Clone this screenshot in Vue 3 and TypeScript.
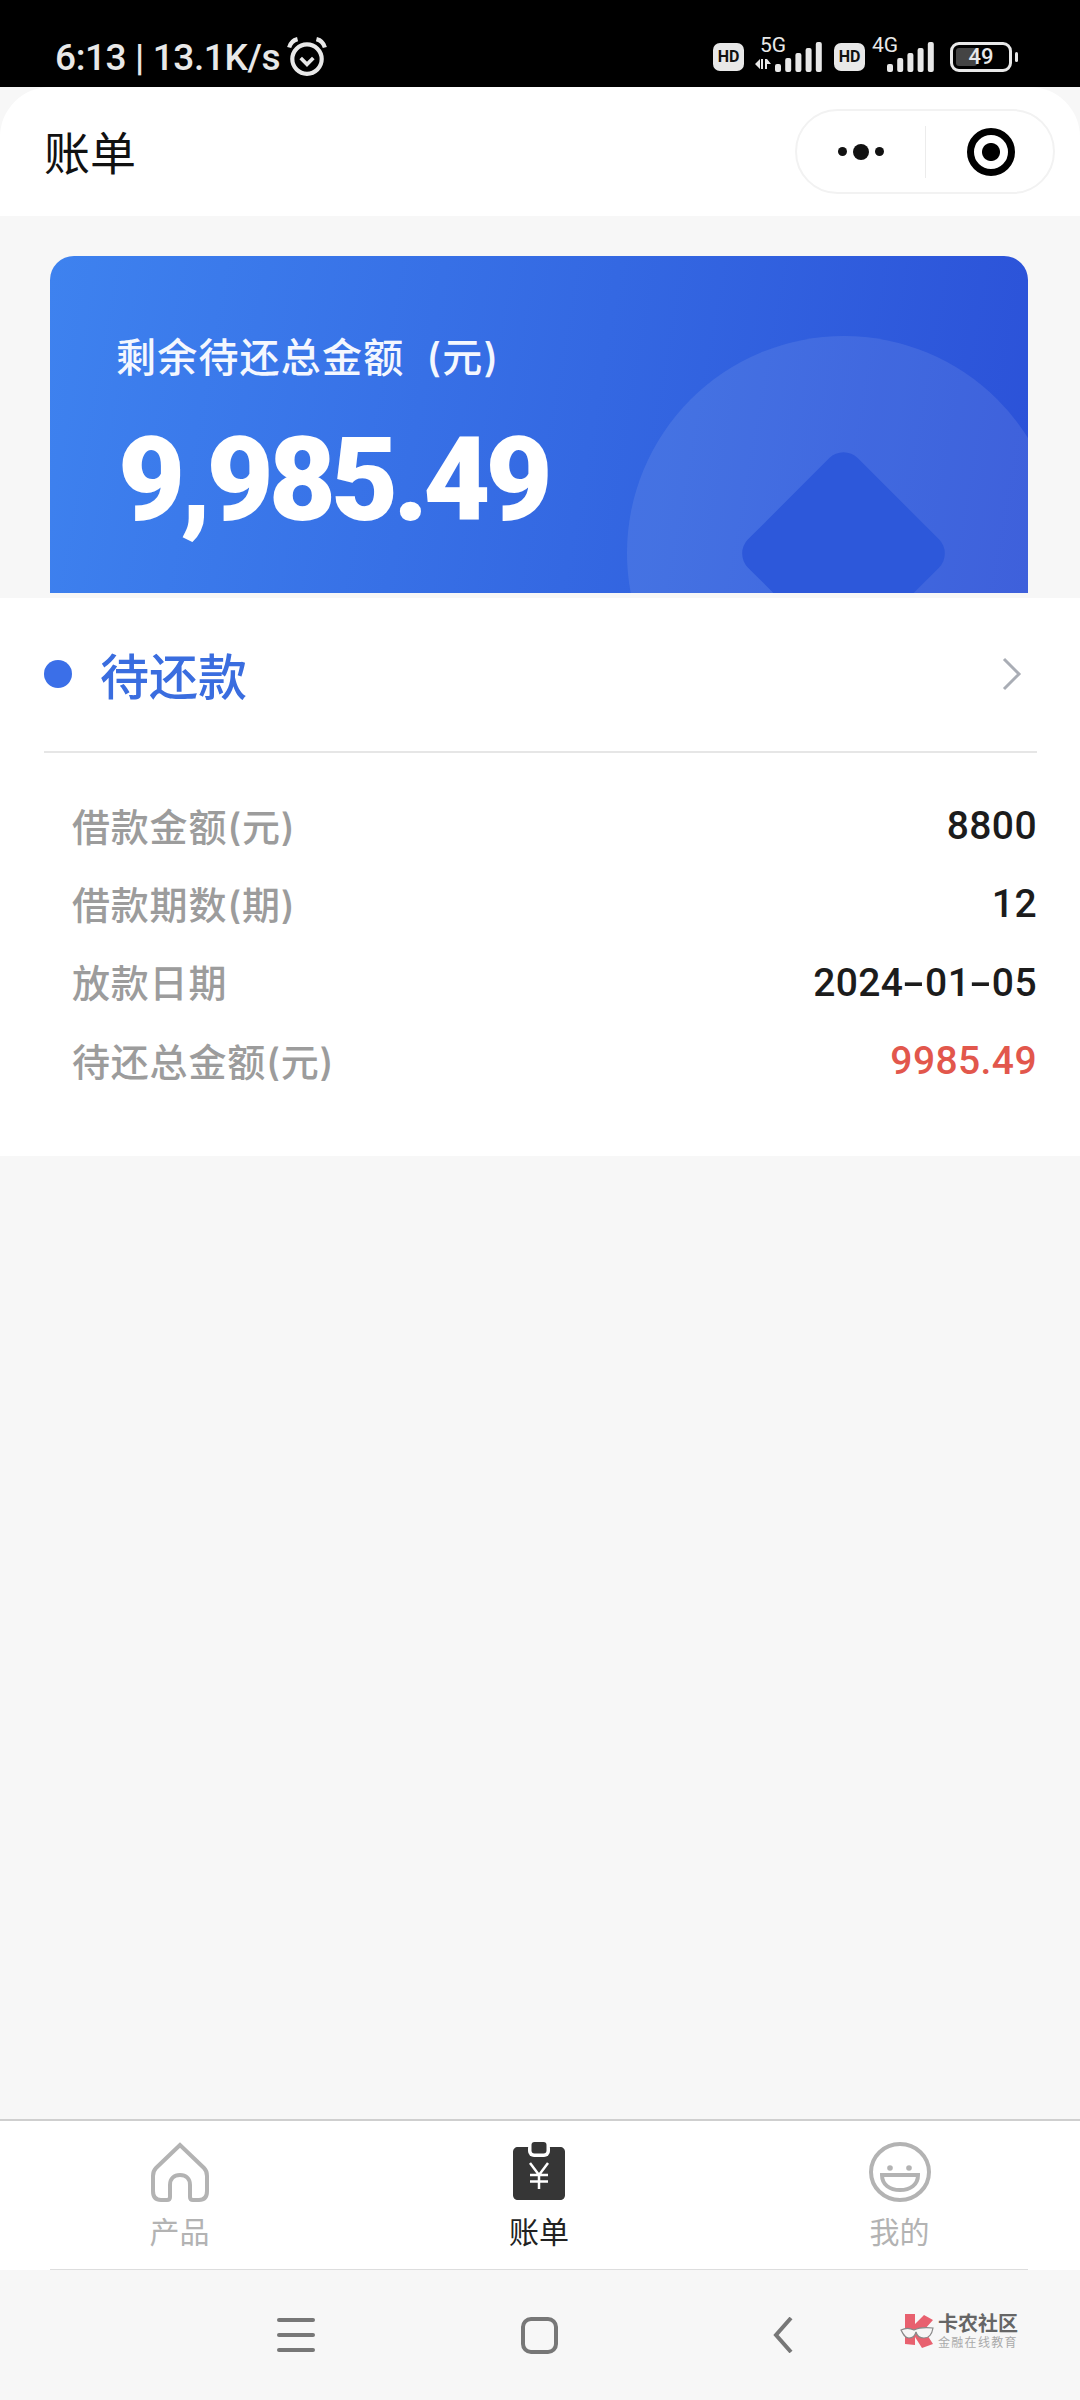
<script setup lang="ts">
const rows = [
  { label: "借款金额(元)", value: ["8800"] },
  { label: "借款期数(期)", value: ["12"] },
  { label: "放款日期", value: ["2024", "01", "05"] },
  { label: "待还总金额(元)", value: ["9985.49"], red: true },
]
const nets = [
  { name: "5G", arrows: true },
  { name: "4G", arrows: false },
]
const bars = [
  { x: 0, top: 22 },
  { x: 10.2, top: 16 },
  { x: 20.4, top: 11 },
  { x: 30.6, top: 6 },
  { x: 40.8, top: 0 },
]
</script>

<template>
  <div class="page">
    <div class="status">
      <div class="status-left">
        <span>6:13 | 13.1K/s</span>
        <svg class="alarm" width="42" height="40" viewBox="0 0 40 38" fill="none" stroke="#e8e8e8">
          <circle cx="20" cy="21" r="14" stroke-width="4" />
          <path d="M14 20l6 6 6-6" stroke-width="3.5" />
          <path d="M3 10c1-4 4-7 8-8M37 10c-1-4-4-7-8-8" stroke-width="4" />
        </svg>
      </div>
      <div class="status-right">
        <div v-for="n in nets" :key="n.name" class="net" :class="{ lte: !n.arrows }">
          <span class="hd">HD</span>
          <div class="sig">
            <span class="gen">{{ n.name }}</span>
            <svg v-if="n.arrows" class="arrows" width="16" height="12" viewBox="0 0 16 12" fill="#e8e8e8">
              <path d="M0 6l5-5v10zM6 1h2v10H6zM10 1h2v10h-2zM12 1l4 5h-4z" />
            </svg>
            <svg width="47" height="30" viewBox="0 0 47 30" fill="#e8e8e8">
              <rect v-for="b in bars" :key="b.x" :x="b.x" :y="b.top" width="6" :height="30 - b.top" rx="2" />
            </svg>
          </div>
        </div>
        <div class="battery">
          <div class="batt-body">
            <span class="batt-fill"></span>
            <span class="batt-num">49</span>
          </div>
          <span class="batt-tip"></span>
        </div>
      </div>
    </div>

    <header class="head">
      <span class="head-title">账单</span>
      <div class="capsule">
        <div class="cap-btn">
          <span class="d small"></span>
          <span class="d"></span>
          <span class="d small"></span>
        </div>
        <span class="cap-line"></span>
        <div class="cap-btn">
          <span class="target"></span>
        </div>
      </div>
    </header>

    <section class="card-wrap">
      <div class="card">
        <span class="circle"></span>
        <span class="diamond"></span>
        <div class="card-label">剩余待还总金额 (元)</div>
        <div class="card-amount">9,985.49</div>
      </div>
    </section>

    <section class="detail">
      <div class="detail-top">
        <span class="dot"></span>
        <span class="detail-title">待还款</span>
        <svg class="chev" width="20" height="34" viewBox="0 0 20 34" fill="none" stroke="#a9adb5" stroke-width="3">
          <path d="M2 2l15 15-15 15" />
        </svg>
      </div>
      <div class="rows">
        <div v-for="r in rows" :key="r.label" class="row">
          <span class="row-label">{{ r.label }}</span>
          <span class="row-value" :class="{ red: r.red }">
            <template v-for="(part, i) in r.value" :key="part">
              <i v-if="i > 0" class="dash">-</i>{{ part }}
            </template>
          </span>
        </div>
      </div>
    </section>

    <div class="spacer"></div>

    <nav class="tabs">
      <div class="tab">
        <svg width="60" height="60" viewBox="0 0 60 60" fill="none" stroke="#b3b3b3" stroke-width="4">
          <path d="M30 3L6 26c-3 3-3 5-3 8v15c0 6 3 9 8 9h6c2 0 3-1 3-3V43c0-6 4-10 10-10s10 4 10 10v12c0 2 1 3 3 3h6c5 0 8-3 8-9V34c0-3 0-5-3-8z" />
        </svg>
        <span>产品</span>
      </div>
      <div class="tab active">
        <svg width="60" height="60" viewBox="0 0 60 60">
          <path d="M9 5h42c3 0 5 2 5 5v43c0 3-2 5-5 5H9c-3 0-5-2-5-5V10c0-3 2-5 5-5z" fill="#363636" />
          <rect x="19" y="0" width="22" height="15" rx="6" fill="#fff" />
          <rect x="22.500" y="0" width="15" height="11.500" rx="3" fill="#363636" />
          <path d="M21 21l9 12 9-12M30 33v14M21 33h18M21 39.500h18" fill="none" stroke="#fff" stroke-width="2.500" />
        </svg>
        <span>账单</span>
      </div>
      <div class="tab">
        <svg width="62" height="60" viewBox="0 0 62 60" fill="none" stroke="#b3b3b3" stroke-width="4">
          <ellipse cx="31" cy="30" rx="29" ry="28" />
          <circle cx="21" cy="26" r="2.800" fill="#b3b3b3" stroke="none" />
          <circle cx="40" cy="26" r="2.800" fill="#b3b3b3" stroke="none" />
          <path d="M13 33h36c0 10-8 15-18 15s-18-5-18-15z" />
        </svg>
        <span>我的</span>
      </div>
    </nav>

    <div class="sysnav">
      <div class="burger"><i></i><i></i><i></i></div>
      <span class="home-key"></span>
      <svg class="back" width="20" height="36" viewBox="0 0 20 36" fill="none" stroke="#777" stroke-width="4">
        <path d="M18 1L3 18l15 17" />
      </svg>
      <div class="logo">
        <svg width="36" height="36" viewBox="0 0 36 36">
          <path d="M5 1h10v10L24 2l9 5-9 10 9 14-11 4-7-11v8l-10-1z" fill="#e8616f" />
          <path d="M1 17c4-2 9-2 13 0 4-2 10-3 19-2-1 6-4 10-9 10-4 0-7-2-8-6-1 4-3 6-7 6s-6-4-8-8z" fill="#f6f6f6" stroke="#888" stroke-width="1.200" />
        </svg>
        <div class="logo-text">
          <span class="logo-main">卡农社区</span>
          <span class="logo-sub">金融在线教育</span>
        </div>
      </div>
    </div>
  </div>
</template>

<style>
html,
body {
  margin: 0;
  background: #000;
}
</style>

<style scoped>
.page {
  width: 1080px;
  height: 2400px;
  display: flex;
  flex-direction: column;
  background: #f7f7f7;
  overflow: hidden;
  font-family: Inter, "Noto Sans CJK SC", sans-serif;
}

.status {
  height: 87px;
  flex: none;
  background: #000;
  color: #e8e8e8;
  display: flex;
  justify-content: space-between;
  padding: 0 62px 0 55px;
  box-sizing: border-box;
}
.status-left {
  display: flex;
  align-items: center;
  gap: 6px;
  height: 114px;
  font: 500 37px Roboto, sans-serif;
  letter-spacing: -0.4px;
  white-space: nowrap;
}
.status-right {
  display: flex;
  align-items: center;
  gap: 12px;
  height: 114px;
}
.net {
  display: flex;
  align-items: flex-end;
  gap: 11px;
}
.net.lte {
  gap: 22px;
}
.hd {
  width: 31px;
  height: 28px;
  border-radius: 7px;
  background: #e8e8e8;
  color: #111;
  font: 700 16px/28px Roboto, sans-serif;
  text-align: center;
  margin-bottom: 1px;
}
.sig {
  position: relative;
  display: flex;
  align-items: flex-end;
  gap: 4px;
  height: 30px;
}
.sig svg {
  display: block;
}
.arrows {
  margin-bottom: 2px;
}
.gen {
  position: absolute;
  left: 5px;
  top: -7px;
  font: 400 21px/21px Roboto, sans-serif;
}
.lte .gen {
  left: -15px;
}
.battery {
  display: flex;
  align-items: center;
  gap: 3px;
  margin-left: 4px;
}
.batt-body {
  position: relative;
  width: 62px;
  height: 30px;
  box-sizing: border-box;
  border: 3px solid #e8e8e8;
  border-radius: 9px;
  padding: 3px;
}
.batt-fill {
  display: block;
  width: 42%;
  height: 100%;
  background: #444;
  border-radius: 3px;
}
.batt-num {
  position: absolute;
  inset: 0;
  font: 500 22px/24px Roboto, sans-serif;
  text-align: center;
}
.batt-tip {
  width: 3px;
  height: 10px;
  background: #e8e8e8;
  border-radius: 2px;
}

.head {
  height: 129px;
  flex: none;
  background: #fff;
  border-radius: 50px 50px 0 0;
  display: flex;
  align-items: center;
  justify-content: space-between;
  padding: 0 25px 0 44px;
  position: relative;
}
.head-title {
  margin-top: -3px;
  font-size: 46px;
  color: #111;
}
.capsule {
  width: 260px;
  height: 85px;
  box-sizing: border-box;
  border: 2px solid #f2f2f2;
  border-radius: 43px;
  display: flex;
  align-items: center;
}
.cap-btn {
  flex: 1;
  display: flex;
  align-items: center;
  justify-content: center;
  gap: 6px;
}
.cap-line {
  width: 1px;
  height: 52px;
  background: #ececec;
}
.d {
  width: 16px;
  height: 16px;
  border-radius: 50%;
  background: #111;
}
.d.small {
  width: 9px;
  height: 9px;
}
.target {
  width: 48px;
  height: 48px;
  margin-left: 4px;
  box-sizing: border-box;
  border: 7px solid #000;
  border-radius: 50%;
  background: radial-gradient(circle, #000 0 8.500px, #fff 9.500px);
}

.card-wrap {
  flex: none;
  height: 382px;
  padding: 40px 52px 5px 50px;
  box-sizing: border-box;
}
.card {
  position: relative;
  height: 337px;
  overflow: hidden;
  border-radius: 24px 24px 0 0;
  background: linear-gradient(100deg, #3e82ef 0%, #3468e2 55%, #2b51d8 100%);
  color: #fff;
  padding: 76px 0 0 66px;
  box-sizing: border-box;
}
.circle {
  position: absolute;
  left: 577px;
  top: 80px;
  width: 434px;
  height: 434px;
  border-radius: 50%;
  background: rgba(255, 255, 255, 0.09);
}
.diamond {
  position: absolute;
  left: 716px;
  top: 220px;
  width: 155px;
  height: 155px;
  border-radius: 20px;
  transform: rotate(45deg);
  background: #2d58da;
}
.card-label {
  position: relative;
  font-size: 40px;
  line-height: 52px;
  font-weight: 500;
  letter-spacing: 1.2px;
  word-spacing: 10px;
  color: #f4f7fe;
  white-space: nowrap;
}
.card-amount {
  position: relative;
  margin-top: 31px;
  margin-left: 2px;
  font: 900 116px/130px Roboto, sans-serif;
  letter-spacing: -5px;
}

.detail {
  flex: none;
  height: 558px;
  background: #fff;
  padding: 0 43px 0 44px;
  box-sizing: border-box;
}
.detail-top {
  height: 155px;
  display: flex;
  align-items: center;
  border-bottom: 2px solid #e6e6e6;
  box-sizing: border-box;
  padding-bottom: 2px;
}
.dot {
  width: 28px;
  height: 28px;
  border-radius: 50%;
  background: #3b6fe8;
}
.detail-title {
  margin-left: 28px;
  flex: 1;
  font-size: 49px;
  font-weight: 500;
  color: #3a6ddf;
}
.chev {
  margin-right: 15px;
}
.rows {
  padding: 33px 0 0 28px;
  display: flex;
  flex-direction: column;
}
.row {
  height: 78.300px;
  display: flex;
  align-items: center;
  justify-content: space-between;
}
.row-label {
  margin-top: -2px;
  font-size: 38px;
  font-weight: 500;
  letter-spacing: 0.8px;
  color: #9c9c9c;
}
.row-value {
  margin-top: 2px;
  font: 500 39px Roboto, sans-serif;
  letter-spacing: 0.4px;
  color: #1c1c1c;
}
.row-value.red {
  color: #e2574c;
}
.dash {
  display: inline-block;
  margin: 0 4px;
  font-style: normal;
  transform: scaleX(1.7);
}

.spacer {
  flex: 1;
}

.tabs {
  flex: none;
  height: 151px;
  background: #fff;
  border-top: 2px solid #cfcfcf;
  box-sizing: border-box;
  display: grid;
  grid-template-columns: 359px 360px 361px;
  position: relative;
}
.tabs::after {
  content: "";
  position: absolute;
  left: 50px;
  right: 52px;
  bottom: 0;
  height: 1px;
  background: #dddddd;
}
.tab {
  display: flex;
  flex-direction: column;
  align-items: center;
  padding-top: 21px;
  color: #b3b3b3;
  font-size: 30px;
  line-height: 36px;
  gap: 12px;
}
.tab.active {
  color: #222;
}
.tab svg {
  display: block;
}

.sysnav {
  flex: none;
  height: 130px;
  position: relative;
  display: flex;
  align-items: center;
  padding-left: 277px;
  box-sizing: border-box;
}
.burger {
  width: 38px;
  display: flex;
  flex-direction: column;
  gap: 11px;
}
.burger i {
  display: block;
  height: 4px;
  background: #777;
  border-radius: 2px;
}
.home-key {
  width: 37px;
  height: 37px;
  margin-left: 206px;
  box-sizing: border-box;
  border: 4px solid #777;
  border-radius: 10px;
}
.back {
  margin-left: 215px;
}
.logo {
  display: flex;
  align-items: center;
  gap: 2px;
  margin-left: 107px;
  margin-top: -8px;
}
.logo-text {
  display: flex;
  flex-direction: column;
  width: 82px;
  white-space: nowrap;
}
.logo-main {
  font-size: 20px;
  line-height: 22px;
  font-weight: 700;
  color: #666;
}
.logo-sub {
  font-size: 12px;
  line-height: 15px;
  letter-spacing: 1.300px;
  color: #aaa;
}
</style>
